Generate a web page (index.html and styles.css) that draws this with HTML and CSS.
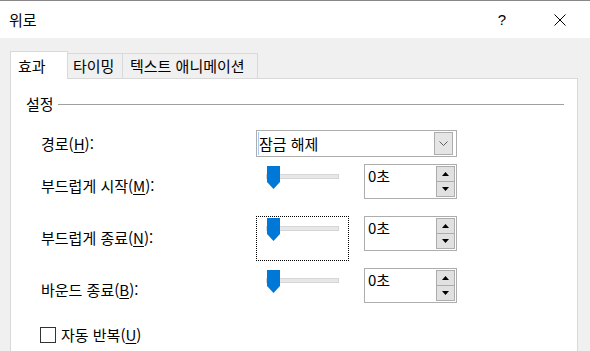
FILE: index.html
```html
<!DOCTYPE html>
<html lang="ko">
<head>
<meta charset="utf-8">
<title>위로</title>
<link rel="stylesheet" href="styles.css">
</head>
<body>
<div class="window">
  <div class="titlebar">
    <span class="title">위로</span>
    <span class="help">?</span>
    <span class="close">
      <svg width="12" height="12" viewBox="0 0 12 12"><path d="M0.5 0.5 L11.5 11.5 M11.5 0.5 L0.5 11.5" stroke="#000" stroke-width="1" fill="none"/></svg>
    </span>
  </div>
  <div class="client">
    <div class="tabs">
      <div class="tab active">효과</div>
      <div class="tab t2">타이밍</div>
      <div class="tab t3">텍스트 애니메이션</div>
    </div>
    <div class="panel">
      <div class="group-head"><span class="group-label">설정</span><span class="rule"></span></div>

      <div class="row r-combo">
        <span class="label">경로(<u>H</u>):</span>
        <div class="combo">
          <span class="caret"></span>
          <span class="ctext">잠금 해제</span>
          <span class="drop"><svg width="9" height="5" viewBox="0 0 9 5"><path d="M0.5 0.5 L4.5 4.5 L8.5 0.5" stroke="#606060" stroke-width="1" fill="none"/></svg></span>
        </div>
      </div>

      <div class="row r-slider first">
        <span class="label">부드럽게 시작(<u>M</u>):</span>
        <div class="slider">
          <span class="track"></span>
          <svg class="thumb" width="13" height="23" viewBox="0 0 13 23"><polygon points="0,0 13,0 13,16 6.5,23 0,16" fill="#0078d7"/></svg>
        </div>
        <div class="spin">
          <span class="val">0초</span>
          <span class="btns">
            <span class="btn up"><svg width="7" height="4" viewBox="0 0 7 4"><polygon points="3.5,0 7,4 0,4" fill="#000"/></svg></span>
            <span class="btn down"><svg width="7" height="4" viewBox="0 0 7 4"><polygon points="0,0 7,0 3.5,4" fill="#000"/></svg></span>
          </span>
        </div>
      </div>

      <div class="row r-slider">
        <span class="label">부드럽게 종료(<u>N</u>):</span>
        <div class="slider focus">
          <span class="track"></span>
          <svg class="thumb" width="13" height="23" viewBox="0 0 13 23"><polygon points="0,0 13,0 13,16 6.5,23 0,16" fill="#0078d7"/></svg>
        </div>
        <div class="spin">
          <span class="val">0초</span>
          <span class="btns">
            <span class="btn up"><svg width="7" height="4" viewBox="0 0 7 4"><polygon points="3.5,0 7,4 0,4" fill="#000"/></svg></span>
            <span class="btn down"><svg width="7" height="4" viewBox="0 0 7 4"><polygon points="0,0 7,0 3.5,4" fill="#000"/></svg></span>
          </span>
        </div>
      </div>

      <div class="row r-slider">
        <span class="label">바운드 종료(<u>B</u>):</span>
        <div class="slider">
          <span class="track"></span>
          <svg class="thumb" width="13" height="23" viewBox="0 0 13 23"><polygon points="0,0 13,0 13,16 6.5,23 0,16" fill="#0078d7"/></svg>
        </div>
        <div class="spin">
          <span class="val">0초</span>
          <span class="btns">
            <span class="btn up"><svg width="7" height="4" viewBox="0 0 7 4"><polygon points="3.5,0 7,4 0,4" fill="#000"/></svg></span>
            <span class="btn down"><svg width="7" height="4" viewBox="0 0 7 4"><polygon points="0,0 7,0 3.5,4" fill="#000"/></svg></span>
          </span>
        </div>
      </div>

      <div class="row r-check">
        <span class="checkbox"></span>
        <span class="check-label">자동 반복(<u>U</u>)</span>
      </div>
    </div>
  </div>
</div>
</body>
</html>
```

FILE: styles.css
```css
html, body {
  margin: 0;
  padding: 0;
}

body {
  width: 590px;
  height: 351px;
  overflow: hidden;
  background: #f0f0f0;
  color: #000;
  font-family: "Noto Sans CJK KR", "Noto Sans", sans-serif;
  font-size: 15px;
}

.window {
  display: flex;
  flex-direction: column;
  height: 351px;
}

.titlebar {
  height: 37px;
  flex: none;
  border-top: 1px solid #888888;
  background: #ffffff;
  display: flex;
  align-items: center;
}

.title {
  flex: 1;
  padding-left: 9px;
  line-height: 20px;
}

.help {
  width: 20px;
  text-align: center;
  font-family: "Liberation Sans", sans-serif;
  font-size: 15px;
  line-height: 20px;
}

.close {
  width: 46px;
  display: flex;
  justify-content: center;
  margin-left: 25px;
  margin-right: 7px;
}

.close svg {
  display: block;
}

.client {
  flex: 1;
  padding: 13px 12px 0 10px;
  display: flex;
  flex-direction: column;
  overflow: hidden;
}

.tabs {
  display: flex;
  align-items: flex-end;
  height: 27px;
  flex: none;
}

.tab {
  box-sizing: border-box;
  height: 25px;
  border: 1px solid #d9d9d9;
  border-bottom: none;
  background: #f0f0f0;
  line-height: 23px;
  white-space: nowrap;
  margin-left: -1px;
}

.tab.active {
  width: 58px;
  height: 28px;
  margin-left: 0;
  margin-bottom: -1px;
  padding-left: 7px;
  background: #ffffff;
  line-height: 27px;
  position: relative;
  z-index: 1;
}

.tab.t2 {
  width: 56px;
  padding-left: 5px;
}

.tab.t3 {
  width: 136px;
  padding-left: 7px;
}

.panel {
  flex: none;
  height: 300px;
  background: #ffffff;
  border: 1px solid #d9d9d9;
}

.group-head {
  display: flex;
  align-items: center;
  height: 20px;
  line-height: 20px;
  margin: 15px 13px 0 15px;
}

.rule {
  flex: 1;
  height: 1px;
  background: #a0a0a0;
  margin-left: 4px;
}

.row {
  display: flex;
  align-items: flex-start;
  margin-left: 30px;
}

.label {
  width: 215px;
  flex: none;
  line-height: 20px;
  white-space: nowrap;
}

u {
  text-decoration: underline;
  text-underline-offset: 2px;
}

.r-combo {
  height: 27px;
  margin-top: 16px;
  align-items: center;
}

.combo {
  box-sizing: border-box;
  width: 201px;
  height: 27px;
  border: 1px solid #adadad;
  display: flex;
  align-items: center;
  background: #ffffff;
}

.caret {
  width: 1px;
  height: 23px;
  margin-left: 1px;
  background: #a9cdee;
}

.ctext {
  flex: 1;
  line-height: 20px;
  padding-left: 0;
}

.drop {
  box-sizing: border-box;
  width: 19px;
  height: 23px;
  margin-right: 3px;
  border: 1px solid #adadad;
  background: #e5e5e5;
  display: flex;
  align-items: center;
  justify-content: center;
}

.drop svg {
  display: block;
}

.r-slider {
  height: 52px;
}

.r-slider .label {
  margin-top: 12px;
}

.r-slider.first {
  margin-top: 7px;
}

.slider {
  box-sizing: border-box;
  width: 93px;
  height: 45px;
  border: 1px dotted transparent;
  position: relative;
  flex: none;
}

.slider.focus {
  border-color: #000000;
}

.track {
  position: absolute;
  left: 9px;
  top: 9px;
  width: 73px;
  height: 5px;
  box-sizing: border-box;
  background: #e7e7e7;
  border: 1px solid #d6d6d6;
}

.thumb {
  position: absolute;
  left: 10px;
  top: 1px;
  display: block;
}

.spin {
  box-sizing: border-box;
  width: 93px;
  height: 35px;
  margin-left: 15px;
  border: 1px solid #adadad;
  background: #ffffff;
  display: flex;
  flex: none;
}

.val {
  flex: 1;
  padding: 1px 0 0 3px;
  line-height: 20px;
}

.btns {
  width: 19px;
  margin: 1px;
  display: flex;
  flex-direction: column;
}

.btn {
  box-sizing: border-box;
  border: 1px solid #adadad;
  background: #e1e1e1;
  display: flex;
  align-items: center;
  justify-content: center;
}

.btn svg {
  display: block;
}

.btn.up {
  height: 16px;
  flex: none;
}

.btn.down {
  flex: 1;
  margin-top: -1px;
}

.r-check {
  margin-top: 7px;
  margin-left: 29px;
  align-items: center;
  height: 16px;
}

.checkbox {
  box-sizing: border-box;
  width: 16px;
  height: 16px;
  border: 1px solid #333333;
  background: #ffffff;
  flex: none;
}

.check-label {
  margin-left: 5px;
  line-height: 20px;
  white-space: nowrap;
}
```
